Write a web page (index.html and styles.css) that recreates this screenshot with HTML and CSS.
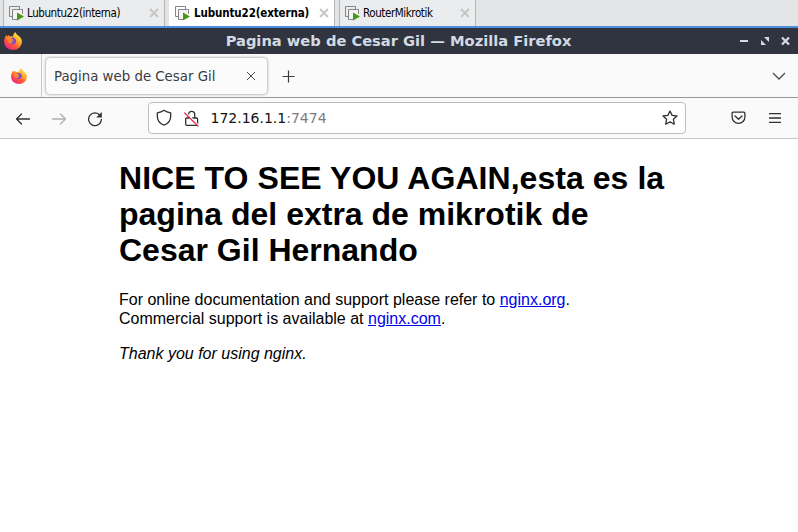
FILE: index.html
```html
<!DOCTYPE html>
<html lang="es">
<head>
<meta charset="utf-8">
<title>Pagina web de Cesar Gil</title>
<link rel="stylesheet" href="styles.css">
</head>
<body>
<svg class="defs" width="0" height="0" aria-hidden="true">
  <defs>
    <linearGradient id="flame" x1="0.85" y1="0.05" x2="0.2" y2="0.95">
      <stop offset="0" stop-color="#fff04a"/><stop offset=".35" stop-color="#ffb02a"/>
      <stop offset=".65" stop-color="#ff5a35"/><stop offset="1" stop-color="#f0208a"/>
    </linearGradient>
    <symbol id="fox" viewBox="0 0 18 18">
      <path fill="url(#flame)" d="M11.500 0c.5 1.800 1.300 2.300 2.700 3.600C16.700 5.500 18 7.500 17.900 10a8.900 8 0 0 1-17.800 0C0 7.300 1 4.800 2.400 2.800l.8 1.800L4.800 3l.8 1.500c1.300-.4 2.400-.3 3.400.2C9 2.800 10 1.200 11.500 0z"/>
      <path fill="#7b4bd8" d="M6.200 7.500C7 5.800 8.500 5 10.300 6c2 1.200 2.500 3.500 1.300 5-1.300 1.500-3.900 1.700-5.500.4-.6-.6-.9-1.100-.9-1.800l2.500.4 1.800-1.500-1-1z"/>
      <path fill="#ff8a2a" d="M2.700 6.400c1.200-1 2.500-1 3.500-.3l2.600.8c.2.900-.9 1.200-1.800 1.600-.2 1.200.4 1.800 2 1.700-1.200 1.300-3.200 1.400-4.700.1z"/>
    </symbol>
    <symbol id="vm" viewBox="0 0 16 16">
      <path fill="none" stroke="#858585" d="M3 10.500H.5v-10h10V3"/>
      <path fill="#f4f4f4" stroke="#858585" d="M8 13.500H3.500v-10h10V8"/>
      <path fill="#46990f" d="M8 6.500l7 4-7 4z"/>
    </symbol>
    <symbol id="cross" viewBox="0 0 10 10"><path d="M1 1l8 8M9 1L1 9"/></symbol>
  </defs>
</svg>

<div class="vm-bar">
  <div class="vm-tab interna"><svg class="vm-icon"><use href="#vm"/></svg><span>Lubuntu22(interna)</span><svg class="vm-close"><use href="#cross"/></svg></div>
  <div class="vm-tab externa"><svg class="vm-icon"><use href="#vm"/></svg><span>Lubuntu22(externa)</span><svg class="vm-close"><use href="#cross"/></svg></div>
  <div class="vm-tab router"><svg class="vm-icon"><use href="#vm"/></svg><span>RouterMikrotik</span><svg class="vm-close"><use href="#cross"/></svg></div>
</div>

<header class="titlebar">
  <svg class="app-icon"><use href="#fox"/></svg>
  <div class="title"><span>Pagina web de Cesar Gil — Mozilla Firefox</span></div>
  <svg class="controls" viewBox="0 0 52 12">
    <path fill="#d3dae3" d="M1 5h8v2H1zM25 2h5v5zM22 5v5h5z"/>
    <path fill="none" stroke="#d3dae3" stroke-width="2.300" d="M43 2.500l7 7M50 2.500l-7 7"/>
  </svg>
</header>

<div class="tabstrip">
  <div class="pinned"><svg class="pin-icon"><use href="#fox"/></svg></div>
  <div class="tab"><span>Pagina web de Cesar Gil</span><svg class="tab-close"><use href="#cross"/></svg></div>
  <svg class="plus" viewBox="0 0 13 13"><path d="M6.500.5v12M.5 6.500h12"/></svg>
  <svg class="chevron" viewBox="0 0 14 8"><path d="M1 1l6 6 6-6"/></svg>
</div>

<nav class="toolbar">
  <svg class="back" viewBox="0 0 16 12"><path d="M14.500 6H1.500M6.500 1l-5 5 5 5"/></svg>
  <svg class="forward" viewBox="0 0 16 12"><path d="M1.500 6h13M9.500 1l5 5-5 5"/></svg>
  <svg class="reload" viewBox="0 0 16 16"><path d="M13.200 4.500A6.400 6.400 0 1 0 14.400 8.500"/><path class="solid" d="M14.800 1v5.600H9.200z"/></svg>
  <div class="urlbar">
    <svg class="shield" viewBox="0 0 16 18"><path d="M8 1.300C6 2.800 3.800 3.500 1.300 3.900V7c0 4.500 2.700 7.800 6.700 9.100 4-1.300 6.700-4.600 6.700-9.100V3.900C12.200 3.500 10 2.800 8 1.300z"/></svg>
    <svg class="lock" viewBox="0 0 15 17"><path d="M4.500 8V4.500a3.100 3.100 0 0 1 6.200 0V8M5 8H2.800C2 8 1.700 8.500 1.700 9v5c0 .8.400 1.300 1.200 1.300h9.500c.8 0 1.200-.5 1.200-1.300V9c0-.7-.4-1-1-1H8.500"/><path class="slash-gap" d="M1.500 2.200l13.200 13"/><path class="slash" d="M.7 3l13.300 13"/></svg>
    <span class="url">172.16.1.1<span class="port">:7474</span></span>
    <svg class="star" viewBox="0 0 16 16"><path d="M8 1l2.100 4.400 4.900.6-3.600 3.300.9 4.900L8 11.900l-4.300 2.300.9-4.900L1 6l4.900-.6z"/></svg>
  </div>
  <svg class="pocket" viewBox="0 0 15 14"><path d="M2.300 1.200h10.400c.8 0 1.200.4 1.200 1.200V6a6.400 6.400 0 0 1-12.800 0V2.400c0-.8.400-1.200 1.200-1.200zM4 5l3.500 3.300L11 5"/></svg>
  <svg class="menu" viewBox="0 0 12 10"><path d="M0 .5h12M0 5h12M0 9.500h12"/></svg>
</nav>

<main class="page">
  <h1><span class="lead">NICE TO SEE YOU AGAIN,esta es la</span> pagina del extra de mikrotik de Cesar Gil Hernando</h1>
  <p>For online documentation and support please refer to <a href="#">nginx.org</a>.<br>
  Commercial support is available at <a href="#">nginx.com</a>.</p>
  <p><em>Thank you for using nginx.</em></p>
</main>
</body>
</html>
```
FILE: styles.css
```css
* { box-sizing: border-box; }
html { height: 100%; overflow: hidden; }
body { margin: 0; height: 100%; display: flex; flex-direction: column; overflow: hidden; background: #fff; font-family: "DejaVu Sans", sans-serif; }
svg { display: block; flex: none; }
.defs { position: absolute; }

.vm-bar { flex: none; height: 28px; display: flex; background: #e3e4e5; border-bottom: 2px solid #4c8fdc; padding-left: 3px; }
.vm-tab { display: flex; align-items: center; height: 26px; background: #ebeced; border: solid #b5b5b5; border-width: 0 1px; padding: 0 5px; font: 11.500px "DejaVu Sans Condensed", "DejaVu Sans", sans-serif; font-stretch: condensed; color: #000; white-space: nowrap; }
.vm-tab span { letter-spacing: -.41px; }
.vm-icon { width: 16px; height: 16px; margin-right: 2px; position: relative; top: 1px; }
.vm-close { width: 10px; height: 10px; margin-left: auto; stroke: #c6c6c6; stroke-width: 2; fill: none; }
.interna { width: 162px; }
.externa { width: 170px; background: #fff; border-left: 4px solid #e3e4e5; font-weight: bold; padding-left: 6px; }
.externa .vm-icon { margin-right: 3px; }
.vm-tab.externa span { letter-spacing: -.12px; }
.router { width: 137px; margin-left: 4px; }

.titlebar { flex: none; height: 26px; display: flex; align-items: center; background: #2f343f; padding: 0 7px 0 4px; }
.app-icon { width: 18px; height: 18px; }
.title { flex: 1; display: flex; justify-content: center; padding: 0 0 1px 36px; color: #d3dae3; font-size: 14.670px; font-weight: bold; line-height: 17px; white-space: nowrap; }
.controls { width: 52px; height: 12px; }

.tabstrip { flex: none; height: 44px; display: flex; align-items: center; background: #fafafa; border-bottom: 1px solid #98989b; }
.pinned { width: 42px; height: 43px; border-right: 1px solid #c7c7c9; display: flex; align-items: center; padding-left: 11px; }
.pin-icon { width: 16px; height: 16px; }
.tab { width: 221px; height: 36px; margin-left: 4px; background: #fbfbfb; border-radius: 4px; box-shadow: 0 0 3px rgba(0,0,0,.5); display: flex; align-items: center; padding: 0 11px 0 8px; font-size: 13.330px; color: #3b3b40; white-space: nowrap; }
.tab span { padding-top: 1px; }
.tab-close { width: 10px; height: 10px; margin-left: auto; stroke: #4b4b50; fill: none; }
.plus { width: 13px; height: 13px; margin-left: 15px; margin-top: 1px; stroke: #3b3b40; stroke-width: 1.200; fill: none; }
.chevron { width: 14px; height: 8px; margin-left: auto; margin-right: 12px; stroke: #4b4b50; stroke-width: 1.300; fill: none; }

.toolbar { flex: none; height: 41px; display: flex; align-items: center; background: #fafafa; border-bottom: 1px solid #c8c8ca; padding-left: 15px; }
.toolbar svg { fill: none; stroke: #303035; stroke-width: 1.300; stroke-linecap: round; stroke-linejoin: round; }
.back, .forward { width: 16px; height: 12px; margin-top: 1px; }
.toolbar .forward { margin-left: 20px; stroke: #b0b0b2; }
.reload { width: 16px; height: 16px; margin-left: 20px; margin-top: 1px; }
.toolbar .solid { fill: #303035; stroke: none; }
.urlbar { width: 538px; height: 32px; margin-left: 45px; display: flex; align-items: center; background: #fff; border: 1px solid #bdbdc0; border-radius: 4px; padding: 0 7px; }
.shield { width: 16px; height: 18px; }
.lock { width: 15px; height: 17px; margin-left: 12px; }
.toolbar .slash-gap { stroke: #fff; stroke-width: 1.200; }
.toolbar .slash { stroke: #e22850; stroke-width: 1.200; }
.url { margin-left: 11.500px; font-size: 14px; color: #111; white-space: nowrap; }
.port { color: #7b7b7e; }
.star { width: 16px; height: 16px; margin-left: auto; }
.pocket { width: 15px; height: 14px; margin-left: 45px; }
.menu { width: 12px; height: 10px; margin-left: 23px; }
.toolbar .menu { stroke-linecap: butt; }

.page { width: 560px; margin: 0 auto; font: 16px "Liberation Sans", Arial, sans-serif; color: #000; }
h1 { font-size: 32px; line-height: 36px; margin: 21px 0 22px; }
.lead { letter-spacing: .05px; }
p { margin: 0 0 16px; line-height: 19px; }
a { color: #0000ee; }
```
